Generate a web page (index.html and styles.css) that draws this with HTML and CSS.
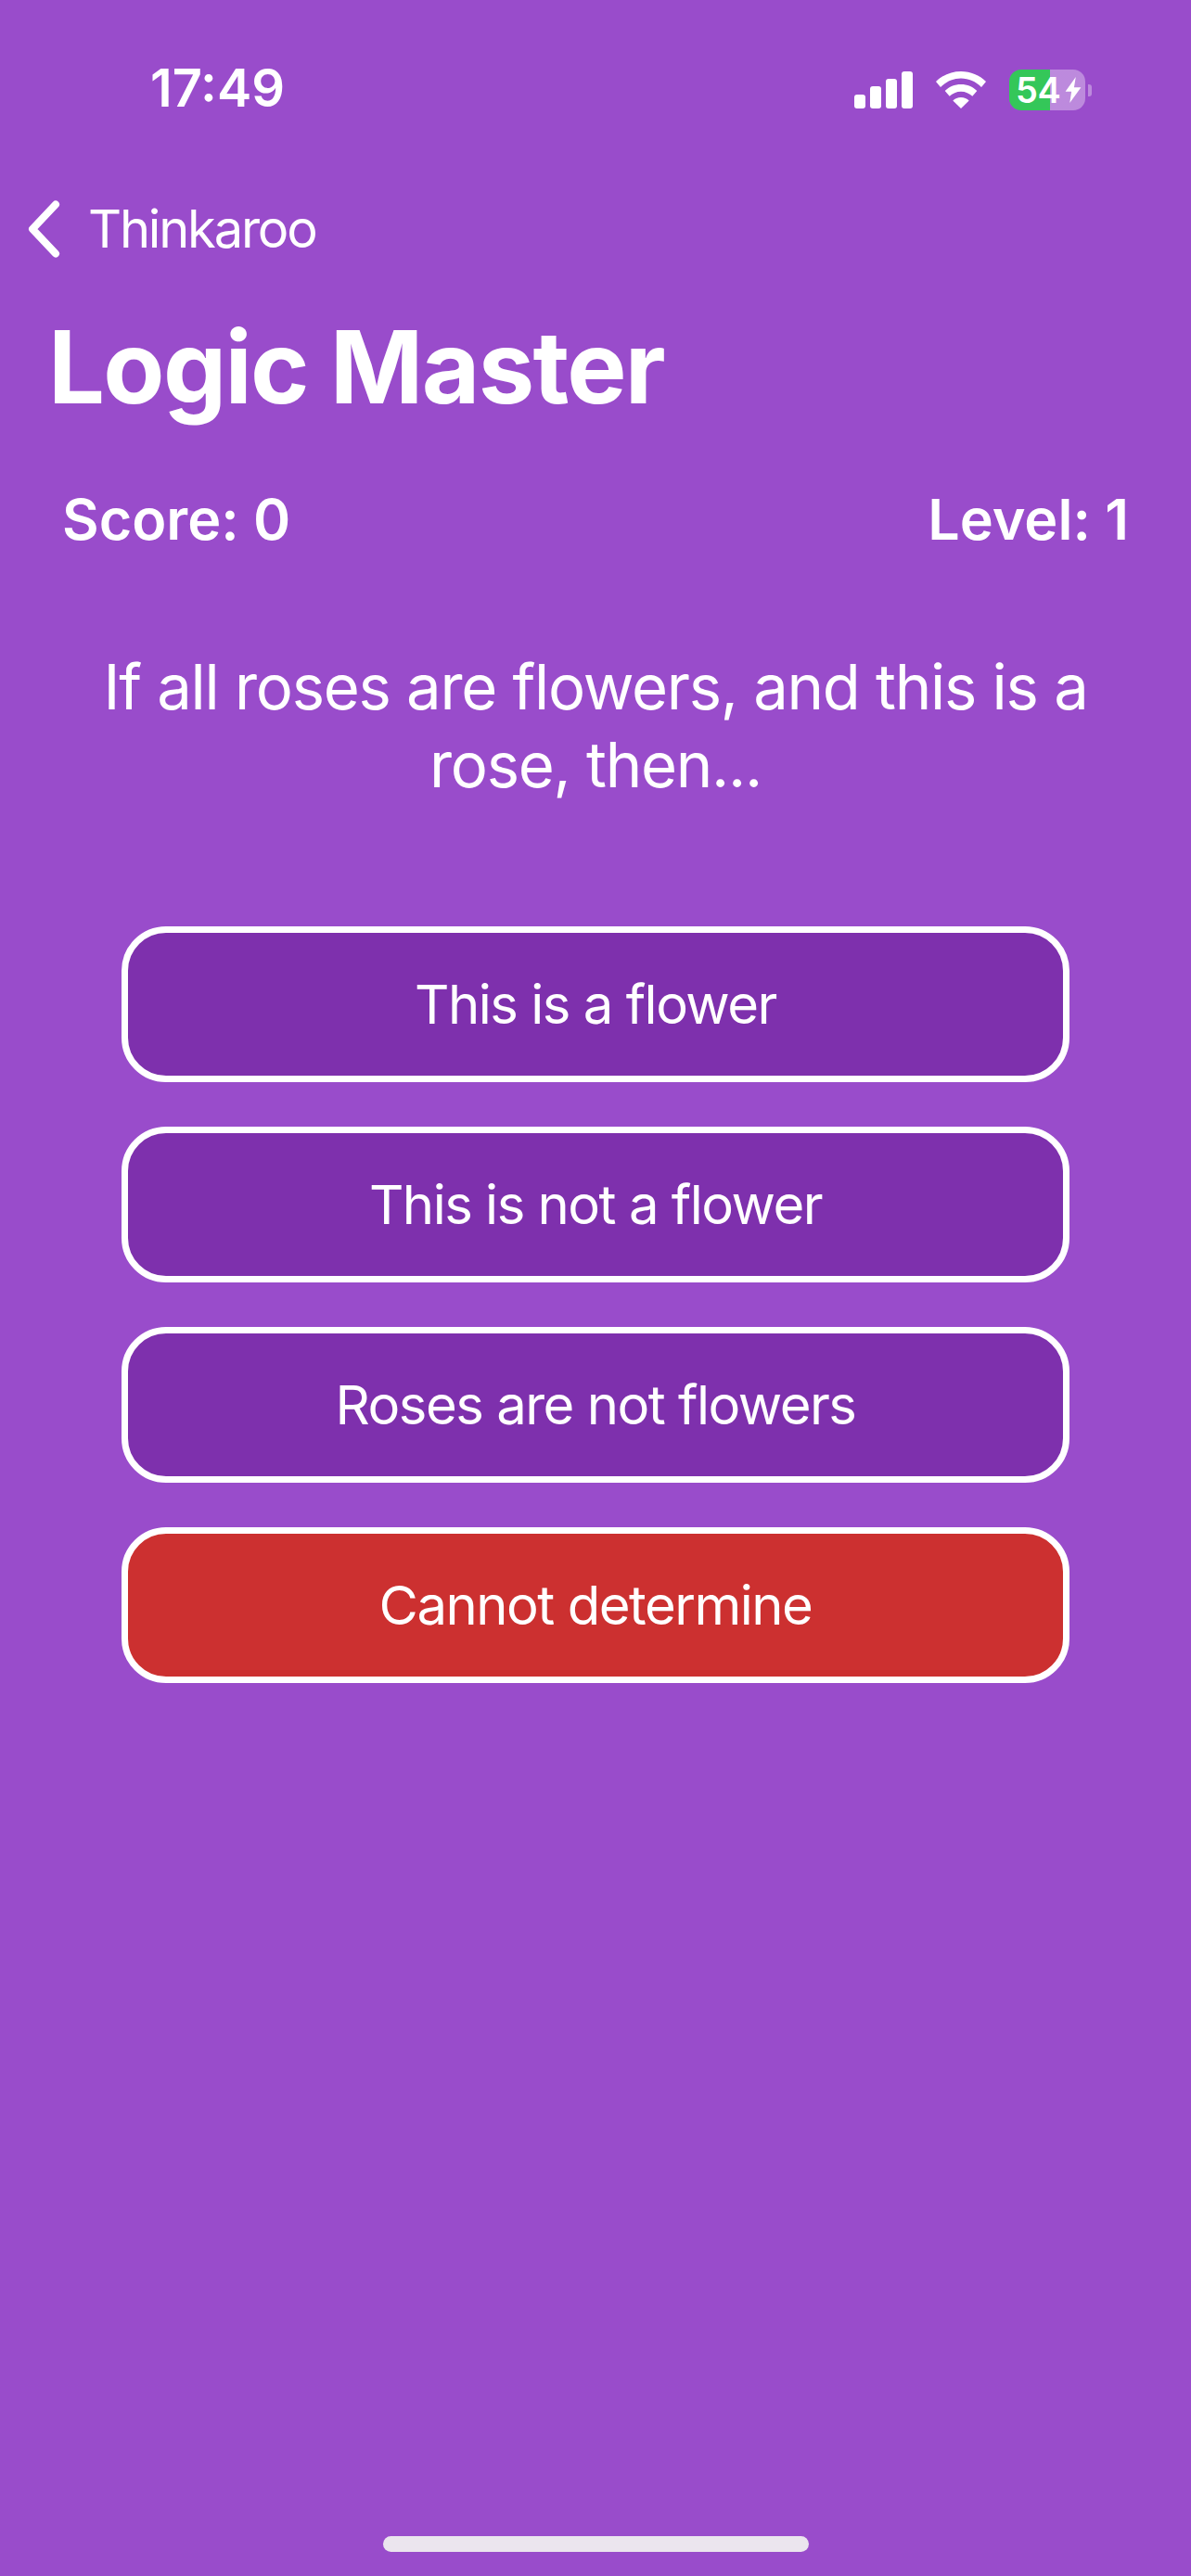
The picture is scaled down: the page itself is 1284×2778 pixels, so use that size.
FILE: index.html
```html
<!DOCTYPE html>
<html lang="en">
<head>
  <meta charset="UTF-8" />
  <meta name="viewport" content="width=device-width, initial-scale=1.0"/>
  <title>Logic Master</title>
  <link rel="stylesheet" href="styles.css">
</head>
<body>
  <div class="screen">
    <div class="status-bar">
      <span class="time">17:49</span>
      <div class="status-icons">
        <div class="signal">
          <span class="bar bar-1"></span>
          <span class="bar bar-2"></span>
          <span class="bar bar-3"></span>
          <span class="bar bar-4"></span>
        </div>
        <svg class="wifi" viewBox="0 0 56 40" width="56" height="40">
          <path d="M28 0C17.500 0 8 4 1 11l5 6C12 11 19.500 7.500 28 7.500S44 11 50 17l5-6C48 4 38.500 0 28 0Z" fill="#fff"/>
          <path d="M28 14c-6.800 0-12.800 2.600-17.300 7l5 5.800c3.200-3 7.500-5 12.300-5s9.100 2 12.300 5l5-5.800c-4.500-4.400-10.500-7-17.300-7Z" fill="#fff"/>
          <path d="M28 28c-3.500 0-6.500 1.300-8.700 3.400L28 40l8.700-8.600C34.500 29.300 31.500 28 28 28Z" fill="#fff"/>
        </svg>
        <div class="battery">
          <div class="battery-body">
            <span class="battery-level">54</span>
            <svg class="bolt" viewBox="0 0 20 30" width="20" height="28">
              <path d="M13 0 1 17h7L6 30l13-18h-8Z" fill="#fff"/>
            </svg>
          </div>
          <span class="battery-nub"></span>
        </div>
      </div>
    </div>

    <div class="back-row">
      <svg class="chevron" viewBox="0 0 35 62" width="35" height="62">
        <path d="M30 4.500 5 31l25 26.500" fill="none" stroke="#fff" stroke-width="8" stroke-linecap="round" stroke-linejoin="round"/>
      </svg>
      <span class="back-label">Thinkaroo</span>
    </div>

    <h1 class="title">Logic Master</h1>

    <div class="score-row">
      <span>Score: 0</span>
      <span>Level: 1</span>
    </div>

    <p class="question">If all roses are flowers, and this is a rose, then...</p>

    <div class="options">
      <button class="option">This is a flower</button>
      <button class="option">This is not a flower</button>
      <button class="option">Roses are not flowers</button>
      <button class="option wrong">Cannot determine</button>
    </div>

    <div class="home-bar"></div>
  </div>
</body>
</html>
```

FILE: styles.css
```css
* {
  box-sizing: border-box;
}

body {
  margin: 0;
  background: #994ccb;
  color: #fff;
  font-family: Inter, "Liberation Sans", sans-serif;
}

.screen {
  height: 2778px;
  display: flex;
  flex-direction: column;
  overflow: hidden;
}

.status-bar {
  height: 190px;
  padding: 62px 107px 0 162px;
  display: flex;
  justify-content: space-between;
  align-items: flex-start;
}

.time {
  font-size: 56px;
  font-weight: 600;
  line-height: 66px;
}

.status-icons {
  display: flex;
  align-items: flex-end;
  gap: 24px;
  padding-top: 13px;
}

.signal {
  display: flex;
  align-items: flex-end;
  gap: 5px;
  height: 40px;
}

.bar {
  width: 12px;
  background: #fff;
  border-radius: 3px;
}

.bar-1 { height: 15px; }
.bar-2 { height: 24px; }
.bar-3 { height: 32px; }
.bar-4 { height: 40px; }

.battery {
  display: flex;
  align-items: center;
  gap: 3px;
  margin-bottom: -2px;
}

.battery-body {
  width: 82px;
  height: 44px;
  padding-left: 7px;
  border-radius: 13px;
  background: linear-gradient(to right, #34c759 54%, rgba(255, 255, 255, 0.35) 54%);
  display: flex;
  align-items: center;
  gap: 4px;
}

.battery-level {
  font-size: 38px;
  font-weight: 600;
  line-height: 44px;
  letter-spacing: -0.5px;
}

.battery-nub {
  width: 4px;
  height: 13px;
  background: rgba(255, 255, 255, 0.35);
  border-radius: 0 3px 3px 0;
}

.back-row {
  padding: 26px 0 53px 30px;
  display: flex;
  align-items: center;
  gap: 30px;
}

.back-label {
  font-size: 56px;
  font-weight: 400;
  line-height: 62px;
  letter-spacing: -2.2px;
}

.title {
  margin: 0;
  padding-left: 52px;
  font-size: 108px;
  font-weight: 700;
  line-height: 130px;
  letter-spacing: -1.7px;
}

.score-row {
  margin-top: 63px;
  padding: 0 67px;
  display: flex;
  justify-content: space-between;
  font-size: 61px;
  font-weight: 600;
  line-height: 72px;
}

.question {
  margin: 103px 0 0;
  padding: 0 80px;
  text-align: center;
  font-size: 67px;
  font-weight: 400;
  line-height: 84px;
  letter-spacing: -1.3px;
}

.options {
  margin-top: 132px;
  padding: 0 131px;
  display: flex;
  flex-direction: column;
  gap: 48px;
}

.option {
  height: 168px;
  background: #7e30ad;
  border: 7px solid #fff;
  border-radius: 48px;
  color: #fff;
  font-family: inherit;
  font-size: 58px;
  font-weight: 400;
  letter-spacing: -1.5px;
}

.option.wrong {
  background: #cc3030;
}

.home-bar {
  width: 459px;
  height: 17px;
  margin: auto auto 26px;
  background: #ebe5ee;
  border-radius: 9px;
}
```
